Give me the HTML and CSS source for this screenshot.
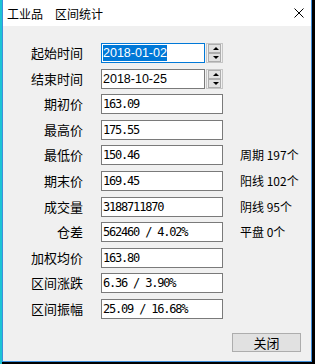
FILE: index.html
```html
<!DOCTYPE html>
<html lang="zh-CN">
<head>
  <meta charset="UTF-8">
  <title>区间统计</title>
  <link rel="stylesheet" href="styles.css">
</head>
<body>
  <div class="window">
    <!-- Title bar -->
    <div class="titlebar">
      <span class="title">工业品</span>
      <span class="title second">区间统计</span>
      <span class="close">
        <svg width="10" height="10" viewBox="0 0 10 10"><path d="M0.5 0.5 L9.5 9.5 M9.5 0.5 L0.5 9.5" stroke="#000" stroke-width="1" fill="none"/></svg>
      </span>
    </div>

    <div class="content">
      <div class="stats">
        <div class="label">起始时间</div>
        <div class="field date">
          <div class="box focus"><span class="selected">2018-01-02</span></div>
          <div class="spin"><span class="up"></span><span class="down"></span></div>
        </div>

        <div class="label">结束时间</div>
        <div class="field date">
          <div class="box">2018-10-25</div>
          <div class="spin"><span class="up"></span><span class="down"></span></div>
        </div>

        <div class="label">期初价</div>
        <div class="field num">163.09</div>

        <div class="label">最高价</div>
        <div class="field num">175.55</div>

        <div class="label">最低价</div>
        <div class="field num">150.46</div>
        <div class="side">周期 197个</div>

        <div class="label">期末价</div>
        <div class="field num">169.45</div>
        <div class="side">阳线 102个</div>

        <div class="label">成交量</div>
        <div class="field num">3188711870</div>
        <div class="side">阴线 95个</div>

        <div class="label">仓差</div>
        <div class="field num">562460 / 4.02%</div>
        <div class="side">平盘 0个</div>

        <div class="label">加权均价</div>
        <div class="field num">163.80</div>

        <div class="label">区间涨跌</div>
        <div class="field num">6.36 / 3.90%</div>

        <div class="label">区间振幅</div>
        <div class="field num">25.09 / 16.68%</div>
      </div>

      <div class="actions">
        <button class="btn">关闭</button>
      </div>
    </div>
  </div>
</body>
</html>
```

FILE: styles.css
```css
* {
  box-sizing: border-box;
  margin: 0;
  padding: 0;
}

body {
  background: #000;
  border-left: 2px solid #1cc4d4;
  height: 364px;
  overflow: hidden;
  font-family: "Noto Sans CJK SC", sans-serif;
  color: #000;
}

.window {
  width: 310px;
  height: 362px;
  background: #f0f0f0;
  border: 1px solid #3f8fdc;
  border-top: none;
}

.titlebar {
  height: 26px;
  background: #fff;
  display: flex;
  align-items: center;
  padding-left: 4px;
  font-size: 12px;
}

.title.second {
  margin-left: 12px;
}

.close {
  margin-left: auto;
  margin-right: 7px;
  display: flex;
}

.content {
  padding: 17px 10px 0 0;
}

.stats {
  display: grid;
  grid-template-columns: 80px 122px auto;
  grid-auto-rows: 20px;
  column-gap: 18px;
  row-gap: 5.6px;
}

.label {
  grid-column: 1;
  text-align: right;
  font-size: 13px;
  line-height: 20px;
}

.field {
  grid-column: 2;
}

.side {
  grid-column: 3;
  font-size: 12px;
  line-height: 20px;
  margin-left: -1px;
}

.num {
  background: #fff;
  border: 1px solid #7a7a7a;
  padding-left: 1px;
  font-family: "DejaVu Sans Mono", monospace;
  font-size: 12px;
  letter-spacing: -1.2px;
  line-height: 18px;
}

.date {
  display: flex;
  gap: 1px;
}

.box {
  width: 104px;
  height: 20px;
  background: #fff;
  border: 1px solid #7a7a7a;
  padding-left: 1px;
  font-family: "Liberation Sans", sans-serif;
  font-size: 12.5px;
  line-height: 18px;
}

.box.focus {
  border-color: #0078d7;
}

.selected {
  background: #0078d7;
  color: #fff;
  padding: 1px 0;
}

.spin {
  width: 17px;
  height: 20px;
  border: 1px solid #c6c6c6;
  padding: 0 1px;
  display: flex;
  flex-direction: column;
  justify-content: space-between;
  background: #f0f0f0;
}

.spin span {
  height: 9px;
  background: #e1e1e1;
  border: 1px solid #adadad;
  position: relative;
}

.spin span::after {
  content: "";
  position: absolute;
  left: 4px;
  border-left: 3px solid transparent;
  border-right: 3px solid transparent;
}

.spin .up::after {
  top: 2px;
  border-bottom: 3px solid #000;
}

.spin .down::after {
  top: 2px;
  border-top: 3px solid #000;
}

.actions {
  display: flex;
  justify-content: flex-end;
  margin-top: 14px;
}

.btn {
  width: 69px;
  height: 19px;
  background: #e1e1e1;
  border: 1px solid #adadad;
  font-family: "Noto Sans CJK SC", sans-serif;
  font-size: 13px;
  line-height: 17px;
  color: #000;
}
```
